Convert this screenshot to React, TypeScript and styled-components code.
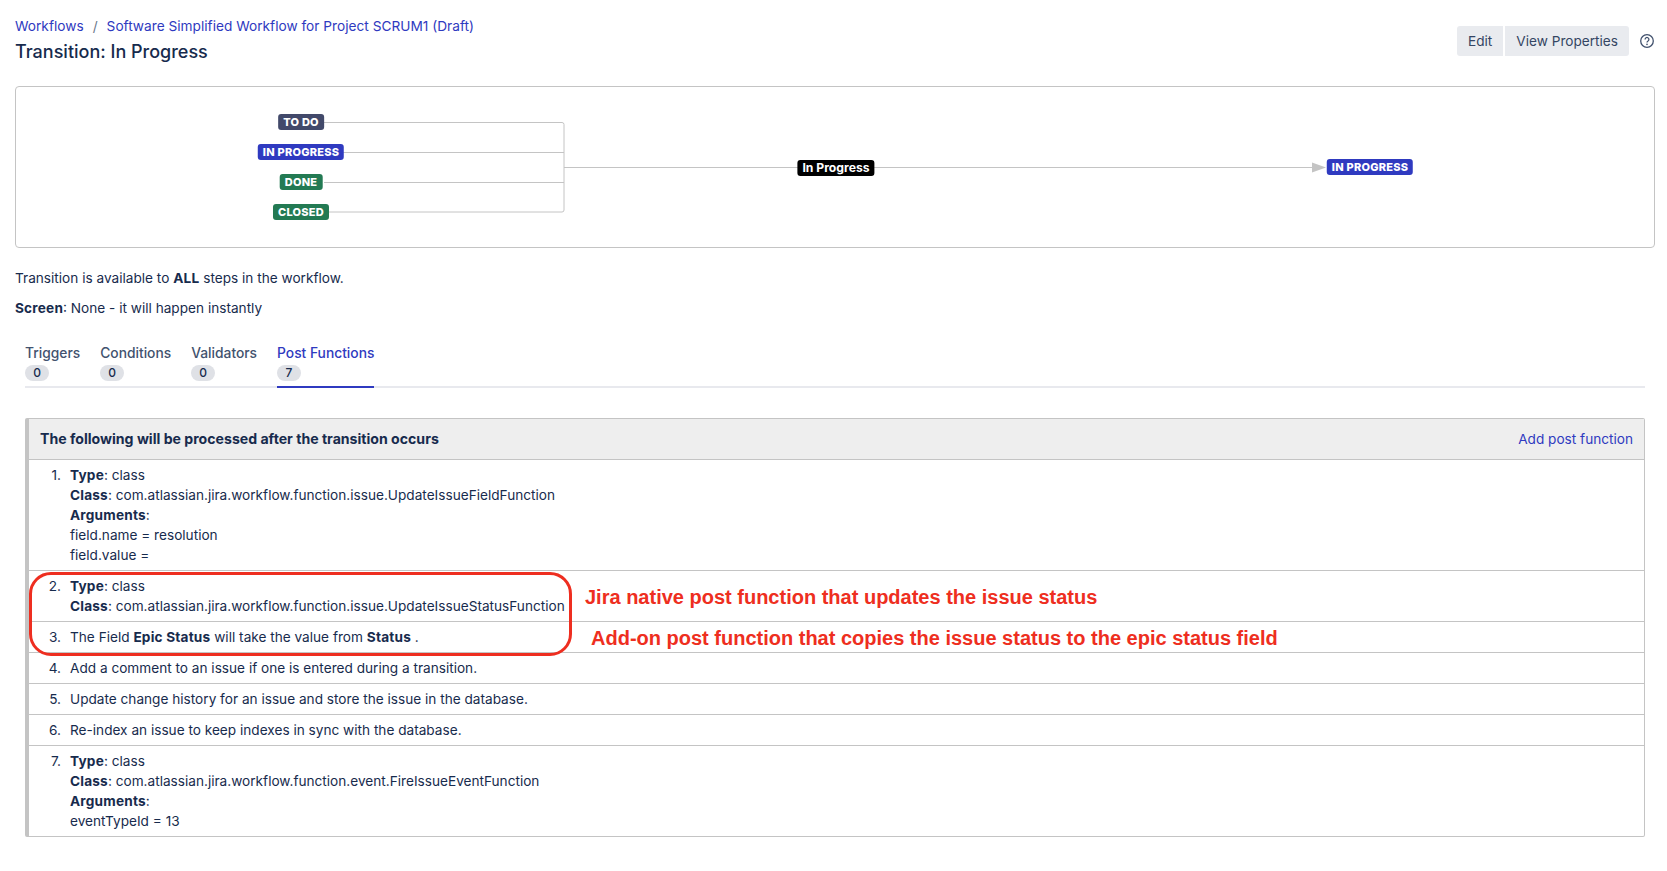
import React from "react";
import styled, { createGlobalStyle } from "styled-components";

const GlobalStyle = createGlobalStyle`
  html, body {
    margin: 0;
    background: #fff;
    color: #172b4d;
    font-family: Inter, "Liberation Sans", sans-serif;
    font-size: 13.63px;
    line-height: 20px;
  }
  b {
    letter-spacing: 0.2px;
  }
`;

const blue = "#2f3ac0";

const Page = styled.div`
  padding: 16px 12px 0 15px;
  height: 855px;
  overflow: hidden;
`;

const Header = styled.header`
  display: flex;
  justify-content: space-between;
  align-items: flex-start;
  height: 70px;
`;

const Breadcrumbs = styled.nav`
  display: flex;
  gap: 9px;
  height: 20px;
  color: #6b778c;
  font-size: 13.7px;
`;

const Crumb = styled.a`
  color: ${blue};
  text-decoration: none;
`;

const Title = styled.h1`
  margin: 4px 0 0;
  font-size: 18px;
  line-height: 24px;
  font-weight: 500;
`;

const Actions = styled.div`
  display: flex;
  align-items: center;
  gap: 2px;
  margin-top: 10px;
`;

const ActionButton = styled.button<{ $side: "left" | "right" }>`
  height: 30px;
  padding: 0 11px;
  border: 0;
  border-radius: ${({ $side }) => ($side === "left" ? "3px 0 0 3px" : "0 3px 3px 0")};
  background: #e9ebef;
  color: #344563;
  font: inherit;
`;

const HelpIcon = styled.svg`
  width: 16px;
  height: 16px;
  margin-left: 8px;
  color: #42526e;
`;

const Diagram = styled.section`
  position: relative;
  box-sizing: border-box;
  height: 162px;
  border: 1px solid #c4c4c4;
  border-radius: 4px;
`;

const Wires = styled.svg`
  position: absolute;
  left: -1px;
  top: -1px;
`;

const Lozenge = styled.span<{ $tone: "dark" | "blue" | "green" | "black"; $cx: number; $cy: number }>`
  position: absolute;
  left: ${({ $cx }) => $cx}px;
  top: ${({ $cy }) => $cy}px;
  transform: translate(-50%, -50%);
  padding: 0 5px;
  height: 16px;
  border-radius: 3px;
  background: ${({ $tone }) =>
    ({ dark: "#42496a", blue, green: "#237a53", black: "#000" })[$tone]};
  color: #fff;
  font-size: ${({ $tone }) => ($tone === "black" ? "12.2px" : "11px")};
  letter-spacing: ${({ $tone }) => ($tone === "black" ? "0" : "0.25px")};
  line-height: 16px;
  font-weight: ${({ $tone }) => ($tone === "black" ? 700 : 800)};
  white-space: nowrap;
`;

const Info = styled.p`
  margin: 0;
  height: 20px;
  padding-top: 10px;
  &:first-of-type {
    padding-top: 20px;
  }
`;

const Tabs = styled.div`
  display: flex;
  gap: 20px;
  margin: 25px 10px 0 10px;
  height: 43px;
  border-bottom: 2px solid #e8e9ee;
`;

const Tab = styled.div<{ $active?: boolean }>`
  display: flex;
  flex-direction: column;
  align-items: flex-start;
  height: 45px;
  box-sizing: border-box;
  color: ${({ $active }) => ($active ? blue : "#42526e")};
  font-size: 13.8px;
  font-weight: 500;
  border-bottom: 2px solid ${({ $active }) => ($active ? blue : "transparent")};
`;

const Count = styled.span`
  min-width: 24px;
  height: 16px;
  margin-top: 2px;
  border-radius: 8px;
  background: #dfe1e6;
  color: #172b4d;
  font-size: 12px;
  line-height: 16px;
  text-align: center;
`;

const Panel = styled.section`
  position: relative;
  margin: 30px 10px 0;
  border: 1px solid #c4c4c4;
  border-left: 4px solid #c4c4c4;
  border-radius: 2px;
`;

const PanelHeader = styled.div`
  display: flex;
  justify-content: space-between;
  align-items: center;
  height: 40px;
  padding: 0 11px;
  background: #eeeeee;
  font-size: 14.12px;
  font-weight: 700;
`;

const AddLink = styled.a`
  color: ${blue};
  font-size: 13.63px;
  font-weight: 400;
`;

const Row = styled.div`
  display: grid;
  grid-template-columns: 32px 1fr;
  column-gap: 9px;
  padding: 5px 0;
  border-top: 1px solid #c4c4c4;
`;

const Num = styled.span`
  text-align: right;
`;

const Line = styled.div``;

const Callout = styled.div`
  position: absolute;
  left: 0px;
  top: 153px;
  box-sizing: border-box;
  width: 543px;
  height: 84px;
  border: 3.5px solid #ee2e20;
  border-radius: 22px;
  pointer-events: none;
`;

const Note = styled.div<{ $x: number; $y: number }>`
  position: absolute;
  left: ${({ $x }) => $x}px;
  top: ${({ $y }) => $y}px;
  color: #ee2e20;
  font-family: "Liberation Sans", Arial, sans-serif;
  font-size: 20px;
  line-height: 24px;
  font-weight: 700;
  white-space: nowrap;
`;

const rows: React.ReactNode[][] = [
  [
    <><b>Type</b>: class</>,
    <><b>Class</b>: com.atlassian.jira.workflow.function.issue.UpdateIssueFieldFunction</>,
    <><b>Arguments</b>:</>,
    "field.name = resolution",
    "field.value =",
  ],
  [
    <><b>Type</b>: class</>,
    <><b>Class</b>: com.atlassian.jira.workflow.function.issue.UpdateIssueStatusFunction</>,
  ],
  [<>The Field <b>Epic Status</b> will take the value from <b>Status</b> .</>],
  ["Add a comment to an issue if one is entered during a transition."],
  ["Update change history for an issue and store the issue in the database."],
  ["Re-index an issue to keep indexes in sync with the database."],
  [
    <><b>Type</b>: class</>,
    <><b>Class</b>: com.atlassian.jira.workflow.function.event.FireIssueEventFunction</>,
    <><b>Arguments</b>:</>,
    "eventTypeId = 13",
  ],
];

const tabs = [
  { label: "Triggers", count: 0 },
  { label: "Conditions", count: 0 },
  { label: "Validators", count: 0 },
  { label: "Post Functions", count: 7, active: true },
];

export default function App() {
  return (
    <Page>
      <GlobalStyle />
      <Header>
        <div>
          <Breadcrumbs>
            <Crumb>Workflows</Crumb>
            <span>/</span>
            <Crumb>Software Simplified Workflow for Project SCRUM1 (Draft)</Crumb>
          </Breadcrumbs>
          <Title>Transition: In Progress</Title>
        </div>
        <Actions>
          <ActionButton $side="left">Edit</ActionButton>
          <ActionButton $side="right">View Properties</ActionButton>
          <HelpIcon viewBox="0 0 16 16" fill="none" stroke="currentColor">
            <circle cx="8" cy="8" r="6.3" strokeWidth="1.3" />
            <path d="M6.1 6.4a1.9 1.9 0 1 1 2.9 1.6c-.7.4-1 .8-1 1.5" strokeWidth="1.3" />
            <circle cx="8" cy="11.4" r=".8" fill="currentColor" stroke="none" />
          </HelpIcon>
        </Actions>
      </Header>

      <Diagram>
        <Wires width="1640" height="162" fill="none" stroke="#c4c4c4">
          <path d="M309 36.5H547a2 2 0 0 1 2 2V124a2 2 0 0 1-2 2H309" />
          <path d="M309 66.5H549M309 96.5H549M549 81.5H1297" />
          <path d="M1297 76.5L1311 81.5L1297 86.5Z" fill="#c4c4c4" stroke="none" />
        </Wires>
        <Lozenge $tone="dark" $cx={285} $cy={35}>TO DO</Lozenge>
        <Lozenge $tone="blue" $cx={285} $cy={65}>IN PROGRESS</Lozenge>
        <Lozenge $tone="green" $cx={285} $cy={95}>DONE</Lozenge>
        <Lozenge $tone="green" $cx={285} $cy={125}>CLOSED</Lozenge>
        <Lozenge $tone="black" $cx={820} $cy={81}>In Progress</Lozenge>
        <Lozenge $tone="blue" $cx={1354} $cy={80}>IN PROGRESS</Lozenge>
      </Diagram>

      <Info>Transition is available to <b>ALL</b> steps in the workflow.</Info>
      <Info><b>Screen</b>: None - it will happen instantly</Info>

      <Tabs>
        {tabs.map((tab) => (
          <Tab key={tab.label} $active={tab.active}>
            {tab.label}
            <Count>{tab.count}</Count>
          </Tab>
        ))}
      </Tabs>

      <Panel>
        <PanelHeader>
          The following will be processed after the transition occurs
          <AddLink>Add post function</AddLink>
        </PanelHeader>
        {rows.map((lines, i) => (
          <Row key={i}>
            <Num>{i + 1}.</Num>
            <div>
              {lines.map((line, j) => (
                <Line key={j}>{line}</Line>
              ))}
            </div>
          </Row>
        ))}
        <Callout />
        <Note $x={556} $y={166}>Jira native post function that updates the issue status</Note>
        <Note $x={562} $y={207}>Add-on post function that copies the issue status to the epic status field</Note>
      </Panel>
    </Page>
  );
}
